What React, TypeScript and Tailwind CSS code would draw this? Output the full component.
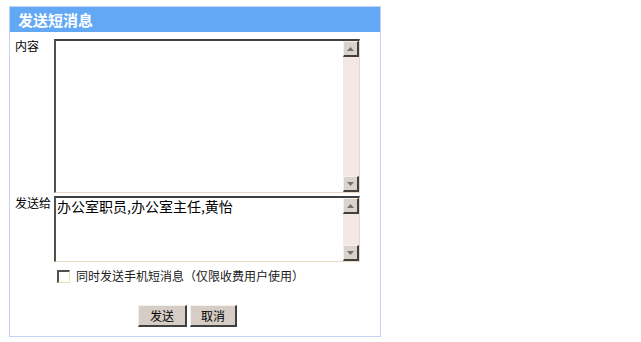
import React from 'react';

const cjk = { fontFamily: '"Noto Sans CJK SC", "Liberation Sans", sans-serif' };

function Arrow({ up }: { up?: boolean }) {
  return (
    <div className="w-[16px] h-[16px] bg-[#d8d4cc] border-t border-l border-t-[#f4f0ec] border-l-[#f4f0ec] border-b-2 border-r-2 border-b-[#404040] border-r-[#404040] flex items-center justify-center">
      <svg width="7" height="4" viewBox="0 0 7 4">
        {up ? <polygon points="3.5,0 7,4 0,4" fill="#707070" /> : <polygon points="0,0 7,0 3.5,4" fill="#707070" />}
      </svg>
    </div>
  );
}

function FakeTextarea({ height, children }: { height: string; children?: React.ReactNode }) {
  return (
    <div className={`flex w-[306px] ${height} border-t-2 border-l-2 border-t-[#404040] border-l-[#505050] border-b border-r border-b-[#ead8c4] border-r-[#ead8c4] bg-white`}>
      <div className="flex-1 px-[1px] pt-0 text-[14px] leading-[16px] text-black" style={cjk}>
        {children}
      </div>
      <div className="w-[16px] flex flex-col justify-between bg-[#f3e8e6]">
        <Arrow up />
        <Arrow />
      </div>
    </div>
  );
}

export default function App() {
  return (
    <div className="w-[641px] h-[342px] bg-white pt-[6px] pl-[9px]" style={cjk}>
      <div className="w-[372px] h-[331px] border border-[#c4d2f4] flex flex-col">
        <div className="h-[25px] bg-[#62a8f4] px-[8px] text-white text-[15px] font-bold leading-[25px]">
          发送短消息
        </div>

        <div className="grid grid-cols-[44px_306px] gap-y-[3px] mt-[7px]">
          <div className="pl-[5px] text-[12px] leading-[14px] text-black">内容</div>
          <FakeTextarea height="h-[154px]" />

          <div className="pl-[5px] text-[12px] leading-[14px] text-black">发送给</div>
          <FakeTextarea height="h-[66px]">办公室职员,办公室主任,黄怡</FakeTextarea>
        </div>

        <div className="flex items-center gap-[6px] ml-[47px] mt-[7px]">
          <div className="w-[13px] h-[13px] border-t-2 border-l-2 border-t-[#505050] border-l-[#505050] border-b border-r border-b-[#e8e0b0] border-r-[#e8e0b0] bg-white" />
          <span className="text-[12px] leading-[14px] text-[#202020]">同时发送手机短消息（仅限收费用户使用）</span>
        </div>

        <div className="flex gap-[3px] ml-[128px] mt-[22px]">
          <button className="w-[49px] h-[22px] bg-[#d6cec6] border-t border-l border-t-[#f4f0ec] border-l-[#f4f0ec] border-b-2 border-r-2 border-b-[#404040] border-r-[#404040] text-[12px] text-black">
            发送
          </button>
          <button className="w-[47px] h-[22px] bg-[#d6cec6] border-t border-l border-t-[#f4f0ec] border-l-[#f4f0ec] border-b-2 border-r-2 border-b-[#404040] border-r-[#404040] text-[12px] text-black">
            取消
          </button>
        </div>
      </div>
    </div>
  );
}
